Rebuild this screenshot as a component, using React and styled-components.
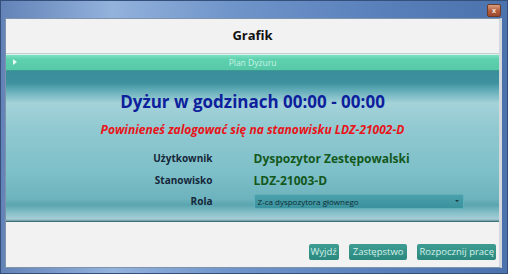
import React from 'react';
import styled, { createGlobalStyle } from 'styled-components';

const Global = createGlobalStyle`
  html, body { margin: 0; padding: 0; }
  body { font-family: "Open Sans", "DejaVu Sans", sans-serif; background: #fff; }
`

const Window = styled.div`
  width: 508px;
  height: 274px;
  box-sizing: border-box;
  display: flex;
  flex-direction: column;
  background: linear-gradient(to right, #6383b8 0%, #93b2dc 22%, #7095ca 45%, #5a80bc 75%, #4c72ad 100%);
  border: 1px solid #34507a;
`

const TitleBar = styled.div`
  height: 17px;
  display: flex;
  justify-content: flex-end;
  align-items: center;
  padding-right: 6px;
  flex-shrink: 0;
`

const CloseButton = styled.div`
  width: 12px;
  height: 11px;
  margin-top: 1px;
  border-radius: 2px;
  background: linear-gradient(#dca080, #b05a3a 55%, #9c4a30);
  border: 1px solid #6e3a2a;
  display: flex;
  align-items: center;
  justify-content: center;
  color: #f4e0d8;
  font-size: 7px;
  font-weight: bold;
  line-height: 1;
`

const Frame = styled.div`
  flex: 1;
  display: flex;
  padding: 0 5px 5px 4px;
  min-height: 0;
`

const Client = styled.div`
  flex: 1;
  display: flex;
  flex-direction: column;
  background: #f2f2f2;
  border: 1px solid #7f93ad;
  border-right: 3px solid #d4d8dc;
`

const Header = styled.div`
  height: 35px;
  display: flex;
  align-items: center;
  justify-content: center;
  padding-bottom: 2px;
  box-sizing: border-box;
  font-size: 13px;
  font-weight: 700;
  color: #111;
  border-bottom: 1px solid #c5cdd5;
`

const AccordionBar = styled.div`
  height: 15px;
  display: flex;
  align-items: center;
  position: relative;
  background: linear-gradient(#7fe0c2 0%, #5dd0ae 30%, #57c9a8 100%);
  border-top: 1px solid #d8f4ea;
  border-bottom: 1px solid #3d9c90;
  font-size: 8.5px;
  color: #c8f2e4;
`

const Arrow = styled.span`
  position: absolute;
  left: 7px;
  top: 4px;
  width: 0;
  height: 0;
  border-top: 3px solid transparent;
  border-bottom: 3px solid transparent;
  border-left: 4px solid #e6fbf4;
`

const BarTitle = styled.span`
  flex: 1;
  text-align: center;
`

const Panel = styled.div`
  height: 151px;
  box-sizing: border-box;
  display: flex;
  flex-direction: column;
  align-items: center;
  padding-top: 20px;
  background: linear-gradient(
    #3a8d9a 0px, #3e919e 12px, #5ba8b4 18px, #a4d2d9 32px, #8fc8d0 60px,
    #7ec0c9 100px, #6db3bd 128px, #5aa5b0 134px, #87c0c9 142px, #a6cdd6 148px, #4a7e88 151px
  );
  border-bottom: 1px solid #3f6f78;
`

const Title = styled.div`
  font-size: 17px;
  font-weight: 700;
  color: #0d1f9c;
  line-height: 22px;
`

const Warning = styled.div`
  margin-top: 9px;
  font-size: 12px;
  font-weight: 700;
  font-style: italic;
  color: #e8141a;
  line-height: 16px;
`

const Rows = styled.div`
  margin-top: 8px;
  display: grid;
  grid-template-columns: 206px 214px;
  column-gap: 41px;
  align-items: center;
  width: 100%;
  padding-left: 1px;
`

const Label = styled.div`
  text-align: right;
  font-size: 10px;
  font-weight: 700;
  color: #15283a;
  height: ${(p) => p.h}px;
  line-height: ${(p) => p.h}px;
`

const Value = styled.div`
  font-size: 12px;
  font-weight: 700;
  color: #13581c;
  line-height: 17px;
`

const Select = styled.div`
  height: 15px;
  width: 210px;
  box-sizing: border-box;
  display: flex;
  align-items: center;
  justify-content: space-between;
  padding: 0 4px 0 3px;
  background: linear-gradient(#4aa0ab, #3a929e);
  border: 1px solid #5fb0ba;
  border-radius: 2px;
  font-size: 8px;
  color: #0e2e34;
`

const Caret = styled.span`
  width: 0;
  height: 0;
  border-left: 2px solid transparent;
  border-right: 2px solid transparent;
  border-top: 2px solid #1a3a40;
`

const Footer = styled.div`
  flex: 1;
  display: flex;
  justify-content: flex-end;
  align-items: flex-end;
  gap: 10px;
  padding: 0 3px 7px 0;
`

const Button = styled.button`
  height: 16px;
  padding: 0 ${(p) => p.pad || 3}px;
  border: none;
  border-radius: 2px;
  background: linear-gradient(#3e9d92, #2b887e);
  color: #d4f0ea;
  font-family: "Open Sans", "DejaVu Sans", sans-serif;
  font-size: 9.5px;
  line-height: 16px;
`

export default function App() {
  return (
    <>
      <Global />
      <Window>
        <TitleBar>
          <CloseButton>x</CloseButton>
        </TitleBar>
        <Frame>
          <Client>
            <Header>Grafik</Header>
            <AccordionBar>
              <Arrow />
              <BarTitle>Plan Dyżuru</BarTitle>
            </AccordionBar>
            <Panel>
              <Title>Dyżur w godzinach 00:00 - 00:00</Title>
              <Warning>Powinieneś zalogować się na stanowisku LDZ-21002-D</Warning>
              <Rows>
                <Label h={24}>Użytkownik</Label>
                <Value>Dyspozytor Zestępowalski</Value>
                <Label h={21}>Stanowisko</Label>
                <Value>LDZ-21003-D</Value>
                <Label h={20}>Rola</Label>
                <Select>
                  <span>Z-ca dyspozytora głównego</span>
                  <Caret />
                </Select>
              </Rows>
            </Panel>
            <Footer>
              <Button pad={2}>Wyjdź</Button>
              <Button pad={4}>Zastępstwo</Button>
              <Button pad={2}>Rozpocznij pracę</Button>
            </Footer>
          </Client>
        </Frame>
      </Window>
    </>
  );
}
